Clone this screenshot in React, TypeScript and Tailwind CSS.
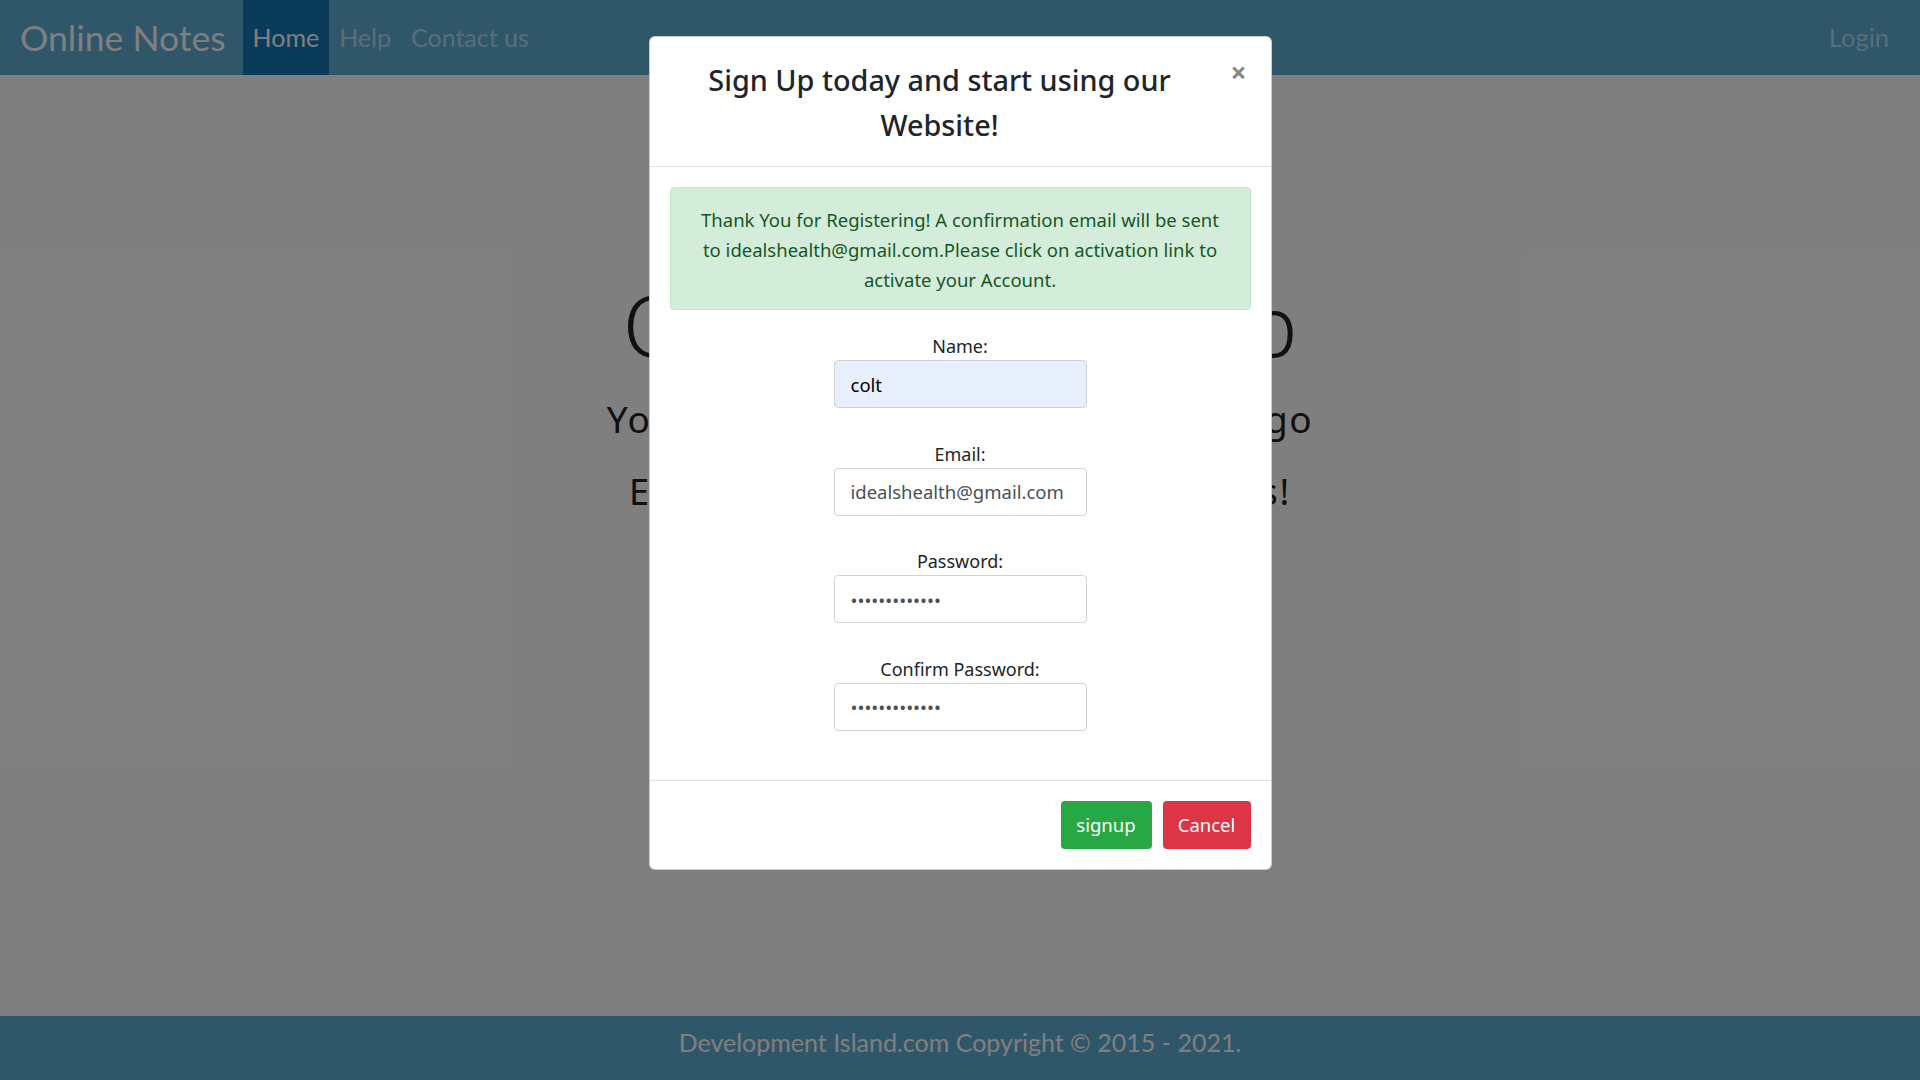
import React from 'react';

const navLinks = [
    { label: 'Home', active: true },
    { label: 'Help', active: false },
    { label: 'Contact us', active: false },
];

const fields = [
    { label: 'Name:', value: 'colt', type: 'text', filled: true },
    { label: 'Email:', value: 'idealshealth@gmail.com', type: 'email', filled: false },
    { label: 'Password:', value: 'sdfsdfsdfsdf1', type: 'password', filled: false },
    { label: 'Confirm Password:', value: 'sdfsdfsdfsdf1', type: 'password', filled: false },
];

export default function App() {
    return (
        <div className="relative h-[1080px] w-full flex flex-col bg-white overflow-hidden">
            {/* Navbar */}
            <nav className="h-[75px] bg-[#60acd4] flex items-stretch font-['Lato',sans-serif]">
                <a className="pl-[20px] pr-[17px] flex items-center text-[35.5px] text-white">Online Notes</a>
                {navLinks.map((link) => (
                    <a
                        key={link.label}
                        className={`px-[10px] flex items-center text-[25px] ${link.active ? 'bg-[#1478b4] text-white' : 'text-[#b4dcf4]'}`}
                    >
                        {link.label}
                    </a>
                ))}
                <a className="ml-auto mr-[20px] px-[11px] flex items-center text-[25.5px] text-[#b4dcf4]">Login</a>
            </nav>

            {/* Jumbotron behind the modal */}
            <main className="flex-1 flex flex-col items-center pt-[208px] font-['Noto_Sans',sans-serif] text-[#222]">
                <h1 className="text-[84.5px] font-light leading-none">Online Notes App</h1>
                <p className="mt-[32px] text-[37px] tracking-[1.6px] leading-none">Your Notes with you wherever you go</p>
                <p className="mt-[37px] text-[36px] tracking-[1.8px] leading-none">Easy to use, protects all your notes!</p>
            </main>

            <footer className="h-[64px] pb-[10px] bg-[#60acd4] flex items-center justify-center font-['Lato',sans-serif] text-[25px] text-white">
                Development Island.com Copyright © 2015 - 2021.
            </footer>

            {/* Backdrop */}
            <div className="absolute inset-0 bg-black/50"></div>

            {/* Modal */}
            <div className="absolute inset-0 flex justify-center pt-[36px] font-['Noto_Sans',sans-serif]">
                <div className="w-[623px] h-fit bg-white rounded-[6px] border border-black/20 text-[#212529]">
                    <div className="flex items-start pl-5 pr-5 pt-5 pb-[19px] border-b border-[#dee2e6]">
                        <h4 className="flex-1 mr-[17px] text-center text-[28.8px] leading-[45px] font-medium">
                            Sign Up today and start using our<br />Website!
                        </h4>
                        <button className="w-[24px] text-[28px] leading-[30px] font-bold text-[#888]">×</button>
                    </div>

                    <div className="px-5 pt-5 pb-[17px]">
                        <div className="mb-[23px] pt-[17px] pb-[14px] px-5 bg-[#d4edda] border border-[#c3e6cb] rounded-[4px] text-[#155724] text-center text-[18.5px] leading-[30px]">
                            Thank You for Registering! A confirmation email will be sent<br />
                            to idealshealth@gmail.com.Please click on activation link to<br />
                            activate your Account.
                        </div>

                        {fields.map((field) => (
                            <div key={field.label} className="mb-[32.5px] flex flex-col items-center">
                                <label className="text-[18px] leading-[27px]">{field.label}</label>
                                <input
                                    type={field.type}
                                    readOnly
                                    value={field.value}
                                    className={`w-[253px] h-[48px] px-4 text-[18.5px] rounded-[4px] border border-[#ced4da] outline-none ${field.filled ? 'bg-[#e8f0fe] text-black' : 'bg-white text-[#495057]'}`}
                                />
                            </div>
                        ))}
                    </div>

                    <div className="flex justify-end gap-[11px] pt-5 pb-5 pr-5 border-t border-[#dee2e6]">
                        <button className="w-[91px] h-[48px] rounded-[4px] bg-[#28a745] text-white text-[18.5px]">signup</button>
                        <button className="w-[88px] h-[48px] rounded-[4px] bg-[#dc3545] text-white text-[18.5px]">Cancel</button>
                    </div>
                </div>
            </div>
        </div>
    );
}
